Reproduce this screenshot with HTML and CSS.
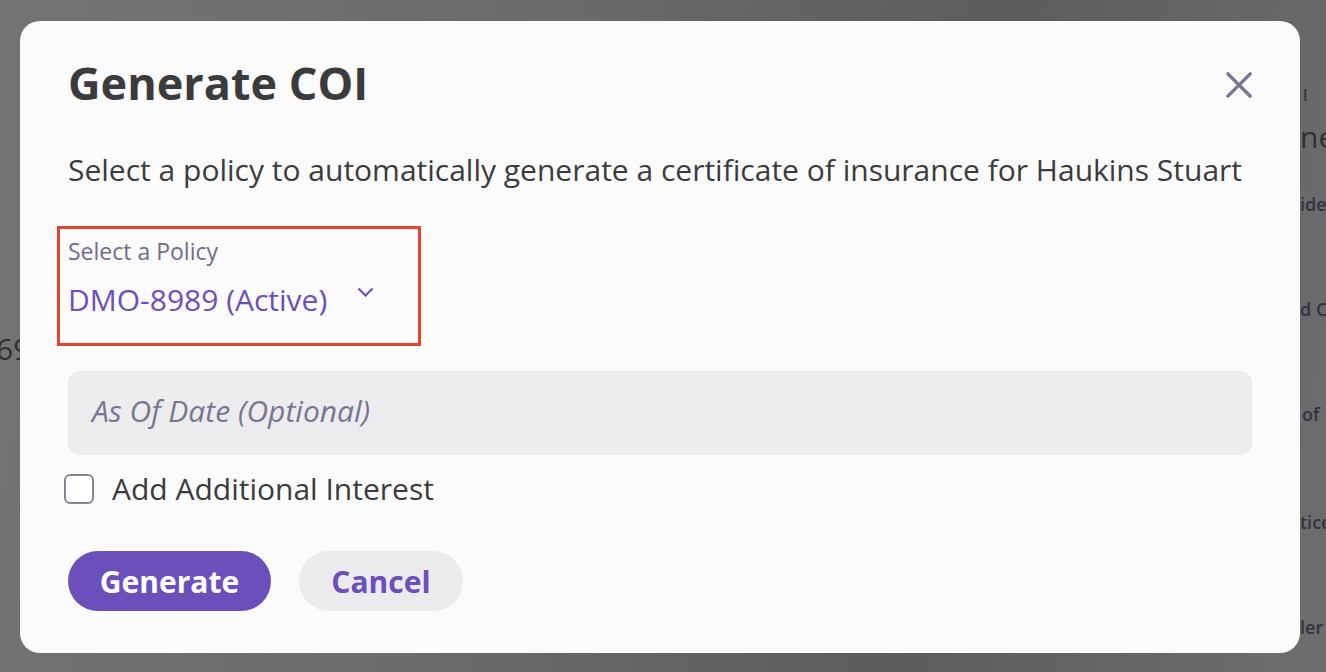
FILE: index.html
```html
<!DOCTYPE html>
<html>
<head>
<meta charset="utf-8">
<link rel="stylesheet" href="styles.css">
</head>
<body>
<div class="backdrop">
  <div class="bg-text bg-1">l</div>
  <div class="bg-text bg-2">ne</div>
  <div class="bg-text bg-3">ider</div>
  <div class="bg-text bg-4">d C</div>
  <div class="bg-text bg-5">of</div>
  <div class="bg-text bg-6">tice</div>
  <div class="bg-text bg-7">ler</div>
  <div class="bg-text bg-8">69</div>
  <div class="modal">
    <div class="modal-head">
      <h1 class="title">Generate COI</h1>
      <button class="close" aria-label="Close">
        <svg width="26" height="26" viewBox="0 0 26 26"><path d="M2 2 L24 24 M24 2 L2 24" stroke="#7a7295" stroke-width="3.2" stroke-linecap="square"/></svg>
      </button>
    </div>
    <p class="desc">Select a policy to automatically generate a certificate of insurance for Haukins Stuart</p>
    <div class="select-box">
      <div class="select-label">Select a Policy</div>
      <div class="select-row">
        <span class="select-value">DMO-8989 (Active)</span>
        <svg class="chev" width="17" height="10" viewBox="0 0 17 10"><path d="M1.5 1.5 L8.5 8.5 L15.5 1.5" fill="none" stroke="#6b4fbb" stroke-width="2.2"/></svg>
      </div>
    </div>
    <div class="date-field">As Of Date (Optional)</div>
    <label class="check-row"><span class="checkbox"></span><span class="check-label">Add Additional Interest</span></label>
    <div class="actions">
      <button class="btn btn-primary">Generate</button>
      <button class="btn btn-secondary">Cancel</button>
    </div>
  </div>
</div>
</body>
</html>
```
FILE: styles.css
```css
html, body { margin: 0; padding: 0; }
body {
  width: 1326px; height: 672px; overflow: hidden;
  font-family: "Open Sans", "Noto Sans", sans-serif;
}
.backdrop {
  position: relative;
  width: 1326px; height: 672px;
  background: linear-gradient(100deg, #747476 0%, #6a6a6c 40%, #5c5c5e 70%, #6e6e70 100%);
  padding: 21px 26px 19px 20px;
  box-sizing: border-box;
}
.bg-text { position: absolute; color: #34323f; font-weight: 600; font-size: 18px; white-space: nowrap; }
.bg-1 { left: 1303px; top: 84px; font-size: 16px; }
.bg-2 { left: 1300px; top: 116px; font-size: 30px; font-weight: 400; color: #2f2f33; }
.bg-3 { left: 1300px; top: 192px; }
.bg-4 { left: 1300px; top: 297px; }
.bg-5 { left: 1302px; top: 402px; }
.bg-6 { left: 1300px; top: 510px; }
.bg-7 { left: 1300px; top: 615px; }
.bg-8 { left: -4px; top: 328px; font-size: 30px; font-weight: 400; color: #2f2f33; }
.modal {
  position: relative;
  background: #fbfbfb;
  border-radius: 20px;
  height: 632px;
  box-sizing: border-box;
  padding: 32px 48px 0 48px;
}
.modal-head { display: flex; justify-content: space-between; align-items: flex-start; }
.title { margin: 0; font-size: 45px; font-weight: 700; color: #3b3b3e; line-height: 60px; }
.close { background: none; border: 0; padding: 0; margin-top: 19px; width: 26px; height: 26px; }
.close svg { display: block; }
.desc { margin: 37px 0 0; font-size: 30px; color: #3b3b3e; line-height: 40px; white-space: nowrap; }
.select-box {
  margin: 36px 0 0 -11px;
  width: 364px; height: 120px;
  box-sizing: border-box;
  border: 3px solid #e5432c;
  padding: 7px 0 0 8px;
}
.select-label { font-size: 23px; color: #716b8a; line-height: 30px; }
.select-row { display: flex; align-items: center; margin-top: 14px; }
.select-value { font-size: 30px; color: #6b4fbb; line-height: 40px; }
.chev { margin-left: 30px; margin-top: -16px; }
.date-field {
  margin-top: 25px;
  height: 84px;
  background: #ececef;
  border-radius: 12px;
  box-sizing: border-box;
  padding: 0 24px 5px;
  display: flex; align-items: center;
  font-size: 30px; font-style: italic; color: #7a7590;
}
.check-row { display: flex; align-items: center; margin: 19px 0 0 -4px; gap: 18px; }
.checkbox { width: 26px; height: 26px; border: 2px solid #8a8299; border-radius: 6px; background: #fff; flex: none; }
.check-label { font-size: 30px; color: #3b3b3e; line-height: 30px; }
.actions { display: flex; gap: 28px; margin-top: 47px; }
.btn { border: 0; height: 60px; border-radius: 30px; font-family: "Open Sans", sans-serif; font-size: 30px; font-weight: 700; padding: 0; }
.btn-primary { width: 203px; background: #6b4fbb; color: #ffffff; }
.btn-secondary { width: 164px; background: #ebebee; color: #6b4fbb; }
```
